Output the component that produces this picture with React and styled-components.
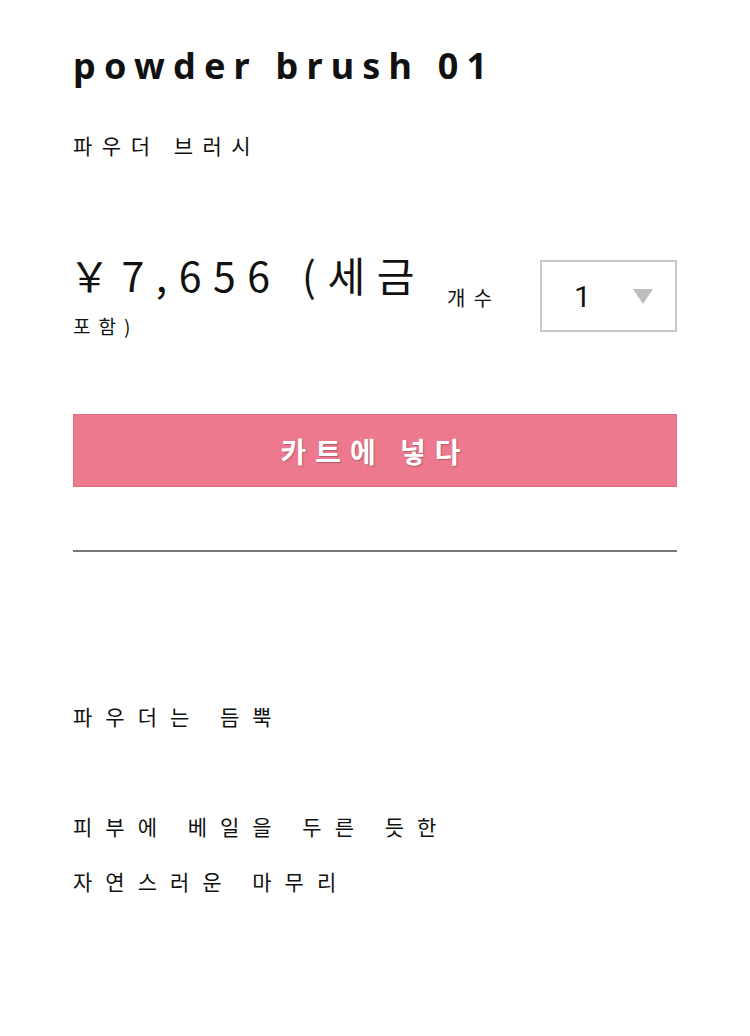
import React from "react";
import styled, { createGlobalStyle } from "styled-components";

const GlobalStyle = createGlobalStyle`
  html, body {
    margin: 0;
    padding: 0;
    background: #fff;
  }
  body {
    font-family: "Noto Sans", "Noto Sans CJK KR", sans-serif;
    color: #111;
  }
`;

const Page = styled.main`
  width: 604px;
  padding: 40px 73px 60px;
`;

const Title = styled.h1`
  margin: 0;
  font-size: 36px;
  font-weight: 700;
  letter-spacing: 8.2px;
  line-height: 52px;
`;

const Subtitle = styled.p`
  margin: 38px 0 0;
  font-family: "Noto Sans CJK KR", sans-serif;
  font-size: 21px;
  font-weight: 400;
  letter-spacing: 9.5px;
  line-height: 30px;
`;

const PriceRow = styled.div`
  display: flex;
  align-items: flex-start;
  margin-top: 88px;
`;

const PriceBlock = styled.div`
  flex: 0 0 374px;
`;

const PriceMain = styled.div`
  font-family: "Noto Sans CJK KR", sans-serif;
  font-size: 41px;
  font-weight: 400;
  letter-spacing: 11.5px;
  line-height: 52px;
  white-space: nowrap;
  margin-left: -4px;
`;

const PriceNote = styled.div`
  font-family: "Noto Sans CJK KR", sans-serif;
  font-size: 19px;
  letter-spacing: 8px;
  line-height: 28px;
  margin-top: 12px;
`;

const QtyLabel = styled.span`
  font-family: "Noto Sans CJK KR", sans-serif;
  font-size: 20px;
  letter-spacing: 8px;
  margin-top: 35px;
  width: 93px;
`;

const Select = styled.div`
  box-sizing: border-box;
  width: 137px;
  height: 72px;
  border: 2px solid #c8c8c8;
  display: flex;
  align-items: center;
  justify-content: space-between;
  padding: 0 22px 0 32px;
  margin-top: 12px;
  font-family: Roboto, sans-serif;
  font-size: 30px;
  color: #111;
`;

const Arrow = styled.span`
  width: 0;
  height: 0;
  border-left: 10px solid transparent;
  border-right: 10px solid transparent;
  border-top: 15px solid #bdbdbd;
`;

const CartButton = styled.button`
  display: block;
  width: 100%;
  height: 73px;
  margin-top: 74px;
  border: 1px solid #e0707f;
  background: #ec798d;
  color: #fff;
  font-family: "Noto Sans CJK KR", sans-serif;
  font-size: 28px;
  font-weight: 700;
  letter-spacing: 9px;
  text-shadow: 1px 1px 1px rgba(90, 60, 60, 0.45);
  cursor: pointer;
`;

const Divider = styled.hr`
  margin: 63px 0 0;
  border: none;
  border-top: 2px solid #777;
`;

const Description = styled.div`
  margin-top: 137px;
  font-family: "Noto Sans CJK KR", sans-serif;
  font-size: 21px;
  letter-spacing: 13px;
  line-height: 55px;
`;

const Line = styled.p`
  margin: 0;
  min-height: 55px;
`;

export default function App() {
  return (
    <>
      <GlobalStyle />
      <Page>
        <Title>powder brush 01</Title>
        <Subtitle>파우더 브러시</Subtitle>

        <PriceRow>
          <PriceBlock>
            <PriceMain>￥7,656 (세금</PriceMain>
            <PriceNote>포함)</PriceNote>
          </PriceBlock>
          <QtyLabel>개수</QtyLabel>
          <Select>
            1
            <Arrow />
          </Select>
        </PriceRow>

        <CartButton>카트에 넣다</CartButton>
        <Divider />

        <Description>
          <Line>파우더는 듬뿍</Line>
          <Line />
          <Line>피부에 베일을 두른 듯한</Line>
          <Line>자연스러운 마무리</Line>
        </Description>
      </Page>
    </>
  );
}
